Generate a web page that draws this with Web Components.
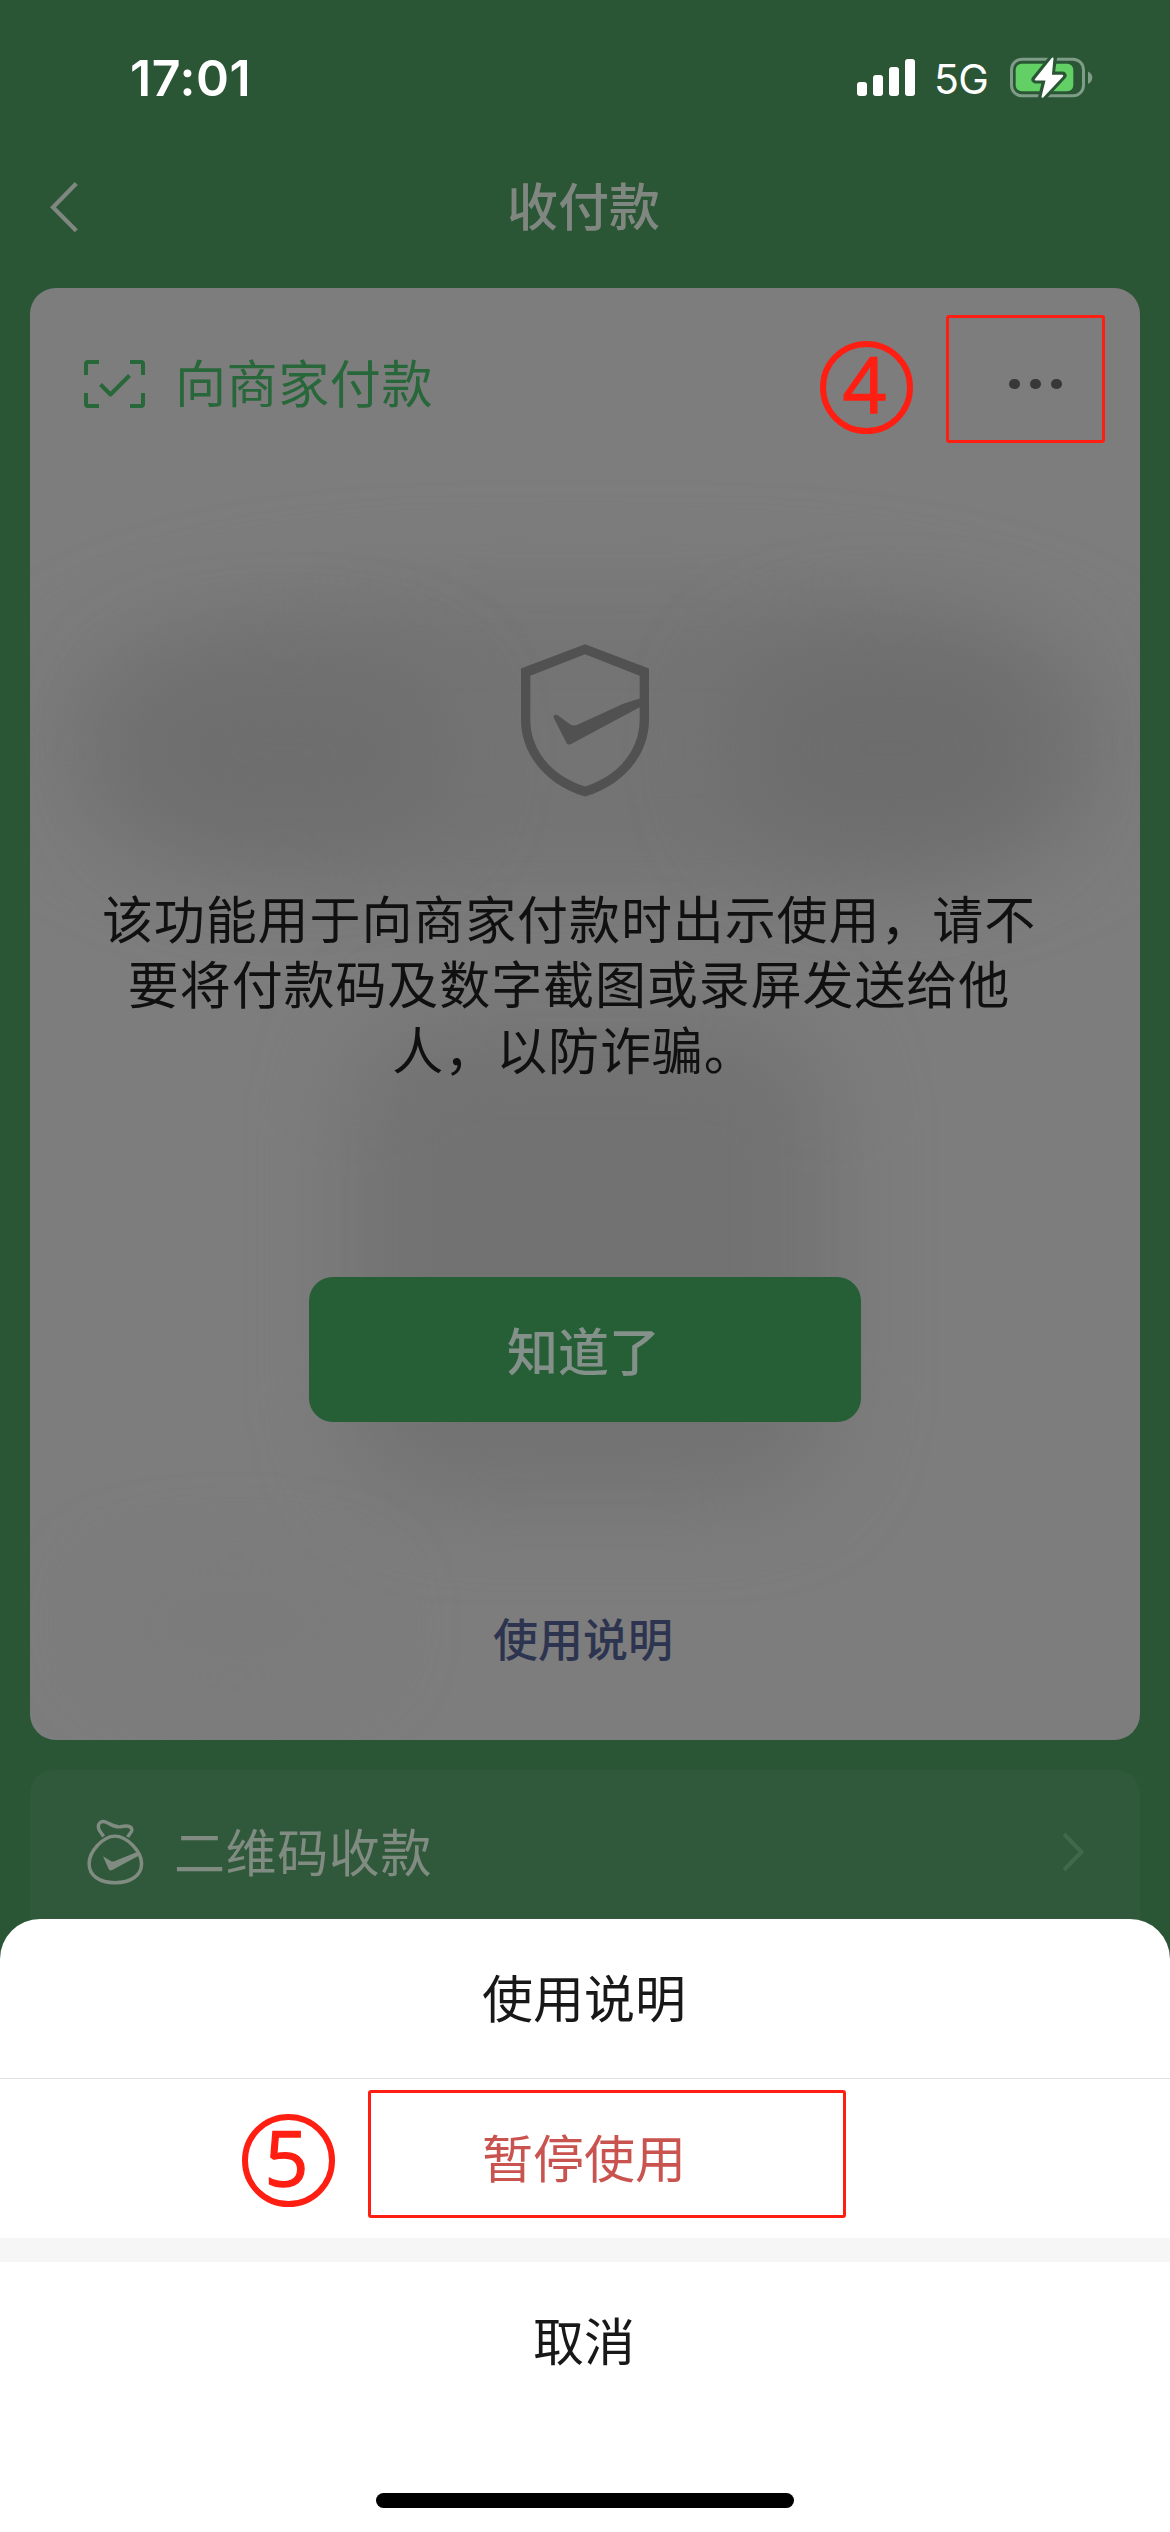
<!DOCTYPE html>
<html lang="zh-CN">
<head>
<meta charset="utf-8">
<meta name="viewport" content="width=device-width">
<title>收付款</title>
<style>
html,body{margin:0;padding:0}
body{width:1170px;height:2532px;overflow:hidden;background:#2a5636;font-family:"Noto Sans CJK SC","Noto Sans",sans-serif}
</style>
</head>
<body>
<pay-screen></pay-screen>
<script>
const define = (name, html) => {
  const t = document.createElement('template');
  t.innerHTML = html;
  customElements.define(name, class extends HTMLElement {
    constructor() {
      super();
      this.attachShadow({ mode: 'open' }).append(t.content.cloneNode(true));
    }
  });
};

define('status-bar', `
<style>
:host{display:flex;height:156px;box-sizing:border-box;padding:0 77px 0 130px;color:#fff;font-family:Inter,sans-serif}
.time{font-size:50px;font-weight:600;line-height:156px;letter-spacing:.6px;flex:1}
.net{font-size:41px;font-weight:400;line-height:159px;width:75px;padding-left:19px;box-sizing:border-box;letter-spacing:-.6px}
svg{display:block;flex:none}
.sig{margin-top:59px}
.bat{margin:54px 0 0 3px}
</style>
<span class="time">17:01</span>
<svg class="sig" width="58" height="37" fill="#fff"><rect y="23" width="10" height="14" rx="3"/><rect x="16" y="16" width="10" height="21" rx="3"/><rect x="32" y="8" width="10" height="29" rx="3"/><rect x="48" width="10" height="37" rx="3"/></svg>
<span class="net">5G</span>
<svg class="bat" width="100" height="48" viewBox="992 54 100 48">
<rect x="1010.5" y="59.2" width="72" height="36.6" rx="10.5" fill="none" stroke="#7f9c87" stroke-width="3"/>
<rect x="1014.7" y="63.7" width="57.6" height="27.6" rx="6" fill="#62d064"/>
<path d="M1087 71.5q4.300 2 4.300 6t-4.300 6.500z" fill="#7f9c87"/>
<path d="M1052 58 1034.500 79.500H1045.500L1041 97.500 1061.500 75.500H1049.500Z" fill="#2a5636" stroke="#2a5636" stroke-width="8" stroke-linejoin="round"/>
<path d="M1051.500 58.500 1034.800 79.500H1045.800L1041.500 96.700 1061.200 75.800H1049.800Z" fill="#fff" stroke="#fff" stroke-width="2" stroke-linejoin="round"/>
</svg>`);

define('nav-bar', `
<style>
:host{display:flex;height:132px;align-items:flex-start;color:#808780}
svg{display:block;margin:24px 0 0 49px;flex:none}
.title{flex:1;text-align:center;margin-right:82px;font-size:51px;font-weight:500;line-height:96px}
</style>
<svg width="30" height="54" viewBox="49 180 30 54"><path d="M76.300 183.500 53 207.300 76.300 230.800" fill="none" stroke="#808780" stroke-width="4.200"/></svg>
<span class="title"><slot></slot></span>`);

define('scan-icon', `
<style>:host{display:block}svg{display:block}</style>
<svg width="61" height="48" fill="none" stroke="#28673a" stroke-width="4"><path d="M2 15V4Q2 2 4 2H15M46 2H57Q59 2 59 4V15M59 33V44Q59 46 57 46H46M15 46H4Q2 46 2 44V33M16.500 24.500 26.500 34.500 45.500 15.500" stroke-linejoin="round"/></svg>`);

define('shield-icon', `
<style>:host{display:block}svg{display:block}</style>
<svg width="128" height="153" viewBox="123 71 384 458" fill="#515151" fill-rule="evenodd"><path d="M315 71 507 144V298C507 405 428 495 315 528 202 495 123 405 123 298V144ZM315 101 151 166V298C151 390 215 466 315 498 415 466 479 390 479 298V260L272 371Q265 374 260 368L221 292Q219 280 231 283L270 311Q282 318 294 312L430 250 479 234V166Z"/></svg>`);

define('bag-icon', `
<style>:host{display:block}svg{display:block}</style>
<svg width="58" height="66" viewBox="48 44 168 190" fill="none" stroke="#808b81" stroke-width="10"><path d="M99 94 86 75C79 57 91 46 107 53 122 60 132 68 148 66 166 62 180 63 181 75 181 81 173 87 169 96"/><path d="M132 93C166 93 209 137 209 173 209 208 176 228 132 228S57 208 57 173C57 137 98 93 132 93Z"/><path fill="#808b81" stroke="none" d="M97 151 121 166Q126 168 132 165L201 137 206 147 124 191Q117 195 113 187Z"/></svg>`);

define('pay-card', `
<style>
:host{display:flex;flex-direction:column;align-items:center;position:relative;height:1452px;margin:0 30px;border-radius:26px;overflow:hidden;background:#7d7d7d}
header{position:relative;align-self:stretch;display:flex;align-items:center;height:192px;box-sizing:border-box;padding:0 78px 0 54px}
header b{flex:1;margin:-6px 0 0 30px;font-size:51px;line-height:80px;letter-spacing:.6px;font-weight:400;color:#28673a}
.dots{display:flex;gap:10.400px}
.dots i{width:10.600px;height:10.600px;border-radius:50%;background:#383838}
shield-icon{position:relative;margin-top:163.500px}
.tip{position:relative;margin:92px 32px 0 0;font-family:"Liberation Sans","Noto Sans CJK SC",sans-serif;font-size:51px;line-height:65.600px;letter-spacing:.9px;color:#101010;text-align:center;white-space:nowrap}
.tip div:last-child{padding-left:10px}
button{all:unset;position:relative;z-index:1;width:552px;height:147px;box-sizing:border-box;height:145px;margin-top:191.700px;border-radius:24px;background:#265e35;color:#83918a;font-size:51px;font-weight:500;line-height:136px;text-align:center;text-indent:-3px}
a{position:relative;margin:186.500px 4px 0 0;font-size:45px;line-height:60px;font-weight:500;color:#2d3450}
.veil{position:absolute;inset:0}
.veil i{position:absolute;border-radius:40%;filter:blur(45px)}
</style>
<div class="veil">
<i style="left:30px;top:300px;width:1050px;height:310px;background:#747474"></i>
<i style="left:90px;top:370px;width:330px;height:190px;background:#6e6e6e"></i>
<i style="left:700px;top:350px;width:320px;height:220px;background:#6d6d6d"></i>
<i style="left:320px;top:730px;width:480px;height:480px;border-radius:20%;background:#727272"></i>
<i style="left:80px;top:1290px;width:250px;height:90px;background:#7a7a7a"></i>
</div>
<header><scan-icon></scan-icon><b>向商家付款</b><span class="dots"><i></i><i></i><i></i></span></header>
<shield-icon></shield-icon>
<div class="tip"><div>该功能用于向商家付款时出示使用，请不</div><div>要将付款码及数字截图或录屏发送给他</div><div>人，以防诈骗。</div></div>
<button>知道了</button>
<a>使用说明</a>`);

define('receive-row', `
<style>
:host{display:flex;align-items:center;height:164px;margin:30px 30px 0;padding:0 54px 0 56px;background:#30593c;border-radius:24px 24px 0 0;color:#808b81}
b{flex:1;margin:-5px 0 0 30px;font-size:51px;line-height:80px;letter-spacing:.6px;font-weight:400}
bag-icon{margin-top:-1px}
svg{display:block}
</style>
<bag-icon></bag-icon><b><slot></slot></b>
<svg width="24" height="42" fill="none" stroke="#40694c" stroke-width="4"><path d="M2 3 19.500 21 2 39"/></svg>`);

define('action-item', `
<style>
:host{display:block;height:159px;line-height:154px;font-size:51px;color:#181818;text-align:center;text-indent:-2px;box-sizing:border-box}
</style><slot></slot>`);

define('action-sheet', `
<style>
:host{position:absolute;left:0;right:0;bottom:0;height:613px;display:flex;flex-direction:column;background:#fff;border-radius:40px 40px 0 0}
.line{height:1px;background:#e1e1e1}
.gap{height:24px;background:#f6f6f6}
.danger{color:#c9534f}
.bar{width:418px;height:15px;border-radius:8px;background:#000;margin:auto auto 24px}
</style>
<action-item>使用说明</action-item><div class="line"></div>
<action-item class="danger">暂停使用</action-item><div class="gap"></div>
<action-item class="cancel">取消</action-item>
<div class="bar"></div>`);

define('step-mark', `
<style>
:host{position:absolute;width:93px;height:93px;box-sizing:border-box;border:6.400px solid #ff1f12;border-radius:50%;color:#ff1f12;font:400 77px/73px "Open Sans",sans-serif;text-align:center;text-indent:-3px;-webkit-text-stroke:1.3px #ff1f12}
</style><slot></slot>`);

define('mark-box', `
<style>:host{position:absolute;box-sizing:border-box;border:3px solid #ff1f12;border-radius:3px}</style>`);

define('pay-screen', `
<style>
:host{display:flex;flex-direction:column;position:relative;width:1170px;height:2532px;overflow:hidden;background:#2a5636}
</style>
<status-bar></status-bar>
<nav-bar>收付款</nav-bar>
<pay-card></pay-card>
<receive-row>二维码收款</receive-row>
<action-sheet></action-sheet>
<step-mark style="left:819.500px;top:340.500px">4</step-mark>
<mark-box style="left:946px;top:315px;width:159px;height:128px"></mark-box>
<step-mark style="left:241.500px;top:2113.500px">5</step-mark>
<mark-box style="left:368px;top:2090px;width:478px;height:128px"></mark-box>`);
</script>
</body>
</html>
